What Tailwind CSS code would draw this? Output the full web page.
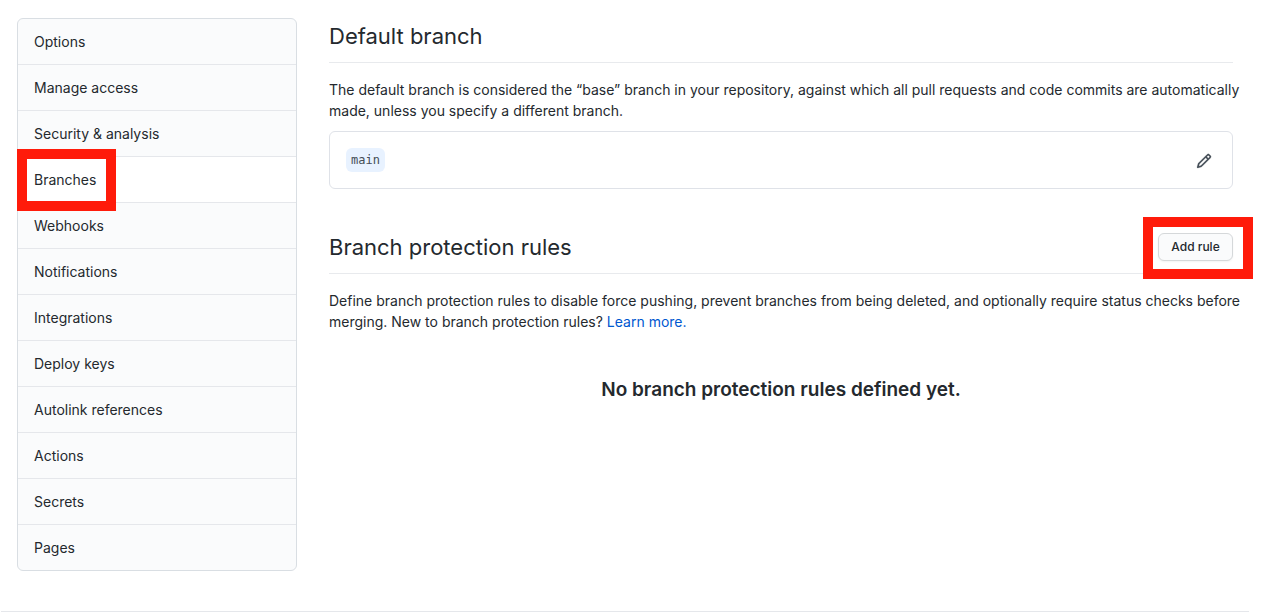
<!DOCTYPE html>
<html lang="en">
<head>
<meta charset="utf-8">
<title>Branches</title>
<script src="https://cdn.jsdelivr.net/npm/@tailwindcss/browser@4"></script>
</head>
<body class="bg-white font-['Inter',sans-serif] text-sm text-[#24292e]">
<div class="flex items-start gap-8 pt-[18px] pl-[17px] pr-[47px]">
  <nav aria-label="Repository settings" class="w-[280px] shrink-0 rounded-md border border-[#d9dee3] bg-[#fafbfc] divide-y divide-[#e5e7eb] leading-[21px]">
    <a href="#" class="block px-4 py-3">Options</a>
    <a href="#" class="block px-4 py-3">Manage access</a>
    <a href="#" class="block px-4 py-3">Security &amp; analysis</a>
    <a href="#" aria-current="page" class="relative block bg-white px-4 py-3">Branches<span class="absolute -left-px -top-2 h-[62px] w-[99px] border-10 border-[#ff1b0a]"></span></a>
    <a href="#" class="block px-4 py-3">Webhooks</a>
    <a href="#" class="block px-4 py-3">Notifications</a>
    <a href="#" class="block px-4 py-3">Integrations</a>
    <a href="#" class="block px-4 py-3">Deploy keys</a>
    <a href="#" class="block px-4 py-3">Autolink references</a>
    <a href="#" class="block px-4 py-3">Actions</a>
    <a href="#" class="block px-4 py-3">Secrets</a>
    <a href="#" class="block px-4 py-3">Pages</a>
  </nav>
  <main class="min-w-0 flex-1 leading-[21px]">
    <h2 class="border-b border-[#e8eaed] pb-2 text-[22px] leading-9">Default branch</h2>
    <p class="-mr-4 mt-4">The default branch is considered the “base” branch in your repository, against which all pull requests and code commits are automatically made, unless you specify a different branch.</p>
    <div class="mt-[10px] flex h-[58px] items-center justify-between rounded-md border border-[#dfe2e8] px-4">
      <code class="rounded-md bg-[#e8f2ff] px-[5px] font-['DejaVu_Sans_Mono',monospace] text-xs leading-6 text-[#444d56]">main</code>
      <button type="button" aria-label="Rename branch" class="mr-1 pt-0.5 text-[#444d56]"><svg class="size-4" viewBox="0 0 16 16" fill="currentColor" stroke="currentColor" stroke-width=".2"><path fill-rule="evenodd" d="M11.013 1.427a1.75 1.75 0 012.474 0l1.086 1.086a1.75 1.75 0 010 2.474l-8.61 8.61c-.21.21-.47.364-.756.445l-3.251.93a.75.75 0 01-.927-.928l.929-3.25a1.75 1.75 0 01.445-.758l8.61-8.61zm1.414 1.06a.25.25 0 00-.354 0L10.811 3.75l1.439 1.44 1.263-1.263a.25.25 0 000-.354l-1.086-1.086zM11.189 6.25L9.75 4.81l-6.286 6.287a.25.25 0 00-.064.108l-.558 1.953 1.953-.558a.249.249 0 00.108-.064l6.286-6.286z"/></svg></button>
    </div>
    <div class="mt-10 flex items-center justify-between border-b border-[#e8eaed] pb-2">
      <h2 class="text-[22px] leading-9">Branch protection rules</h2>
      <div class="relative">
        <button type="button" class="block h-7 w-[75px] rounded-md border border-[#d5d8da] bg-[#fafbfc] text-xs font-medium shadow-xs">Add rule</button>
        <span class="absolute -left-[15px] -top-4 h-[62px] w-[110px] border-10 border-[#ff1b0a]"></span>
      </div>
    </div>
    <p class="-mr-4 mt-4">Define branch protection rules to disable force pushing, prevent branches from being deleted, and optionally require status checks before merging. New to branch protection rules? <a href="#" class="text-[#0058d0]">Learn more.</a></p>
    <h3 class="mt-[43px] text-center text-[19px] leading-[30px] font-semibold">No branch protection rules defined yet.</h3>
  </main>
</div>
<hr class="mt-10 mr-[31px] ml-px border-[#e5e7eb]">
</body>
</html>
